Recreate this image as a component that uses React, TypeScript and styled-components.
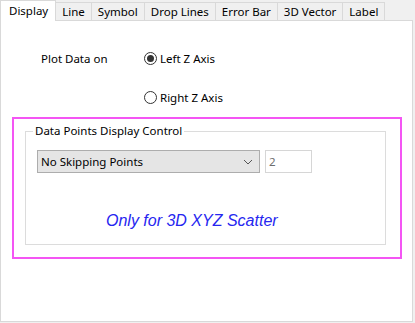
import React from "react";
import styled, { createGlobalStyle } from "styled-components";

const GlobalStyle = createGlobalStyle`
  html, body {
    margin: 0;
    padding: 0;
    background: #f0f0f0;
  }
  body {
    font-family: "Noto Sans", "Segoe UI", sans-serif;
    font-size: 11.5px;
    color: #000;
  }
`;

const tabs = ["Display", "Line", "Symbol", "Drop Lines", "Error Bar", "3D Vector", "Label"];

const App = () => {
  return (
    <>
      <GlobalStyle />
      <Window>
        <TabBar>
          {tabs.map((t, i) => (
            <Tab key={t} $active={i === 0}>
              {t}
            </Tab>
          ))}
        </TabBar>
        <Panel>
          <OptionGrid>
            <OptionLabel>Plot Data on</OptionLabel>
            <RadioRow>
              <Radio $checked />
              <span>Left Z Axis</span>
            </RadioRow>
            <span />
            <RadioRow>
              <Radio />
              <span>Right Z Axis</span>
            </RadioRow>
          </OptionGrid>

          <Highlight>
            <GroupBox>
              <GroupTitle>Data Points Display Control</GroupTitle>
              <ControlRow>
                <Select>
                  <span>No Skipping Points</span>
                  <svg width="10" height="6" viewBox="0 0 10 6">
                    <path d="M1 1 L5 5 L9 1" fill="none" stroke="#555" strokeWidth="1" />
                  </svg>
                </Select>
                <NumberBox>2</NumberBox>
              </ControlRow>
              <Note>Only for 3D XYZ Scatter</Note>
            </GroupBox>
          </Highlight>
        </Panel>
      </Window>
    </>
  );
};
export default App;

const Window = styled.div`
  width: 415px;
  height: 323px;
  display: flex;
  flex-direction: column;
`;

const TabBar = styled.div`
  display: flex;
  align-items: flex-end;
  height: 20px;
`;

const Tab = styled.div<{ $active?: boolean }>`
  position: relative;
  z-index: ${(p) => (p.$active ? 2 : 1)};
  display: flex;
  align-items: center;
  box-sizing: border-box;
  height: ${(p) => (p.$active ? "21px" : "18px")};
  margin-bottom: ${(p) => (p.$active ? "-1px" : "0")};
  margin-left: -1px;
  padding: ${(p) => (p.$active ? "0 7px 2px 8px" : "0 6px 0 6px")};
  border: 1px solid #d9d9d9;
  border-bottom: none;
  background: ${(p) => (p.$active ? "#fff" : "#f0f0f0")};
  white-space: nowrap;
  &:first-child {
    margin-left: 0;
  }
`;

const Panel = styled.div`
  box-sizing: border-box;
  width: 413px;
  height: 302px;
  background: #fff;
  border: 1px solid #d9d9d9;
  padding: 27px 0 0 11px;
`;

const OptionGrid = styled.div`
  display: grid;
  grid-template-columns: 103px auto;
  grid-auto-rows: 20px;
  row-gap: 19px;
  padding-left: 29px;
  align-items: center;
`;

const OptionLabel = styled.span`
  white-space: nowrap;
`;

const RadioRow = styled.label`
  display: flex;
  align-items: center;
  gap: 3px;
`;

const Radio = styled.span<{ $checked?: boolean }>`
  box-sizing: border-box;
  width: 13px;
  height: 13px;
  border-radius: 50%;
  border: 1px solid #333;
  background: #fff;
  display: flex;
  align-items: center;
  justify-content: center;
  &::after {
    content: "";
    width: 7px;
    height: 7px;
    border-radius: 50%;
    background: ${(p) => (p.$checked ? "#333" : "transparent")};
  }
`;

const Highlight = styled.div`
  box-sizing: border-box;
  width: 390px;
  height: 142px;
  margin-top: 10px;
  border: 2px solid #f455f4;
  padding: 12px 0 0 11px;
`;

const GroupBox = styled.div`
  position: relative;
  box-sizing: border-box;
  width: 361px;
  height: 114px;
  border: 1px solid #dcdcdc;
  padding: 18px 0 0 11px;
`;

const GroupTitle = styled.span`
  position: absolute;
  top: -9px;
  left: 7px;
  padding: 0 2px;
  background: #fff;
  line-height: 16px;
  white-space: nowrap;
`;

const ControlRow = styled.div`
  display: flex;
  gap: 5px;
`;

const Select = styled.div`
  box-sizing: border-box;
  width: 223px;
  height: 23px;
  background: #e5e5e5;
  border: 1px solid #adadad;
  display: flex;
  align-items: center;
  justify-content: space-between;
  padding: 0 6px 0 3px;
`;

const NumberBox = styled.div`
  box-sizing: border-box;
  width: 47px;
  height: 23px;
  border: 1px solid #d6d6d6;
  display: flex;
  align-items: center;
  padding-left: 3px;
  color: #6d6d6d;
`;

const Note = styled.div`
  margin: 38px 0 0 69px;
  font-family: "Liberation Sans", Arial, sans-serif;
  font-style: italic;
  font-size: 16px;
  line-height: 20px;
  color: #2626f0;
`;
